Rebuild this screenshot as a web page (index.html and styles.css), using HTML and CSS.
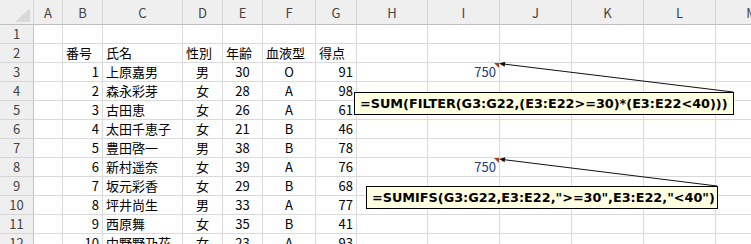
FILE: index.html
```html
<!DOCTYPE html>
<html lang="ja">

<head>
    <meta charset="UTF-8">
    <title>SUM FILTER と SUMIFS</title>
    <link rel="stylesheet" href="styles.css">
</head>

<body>
    <div class="sheet">
        <table class="grid">
            <colgroup>
                <col class="w-head">
                <col class="w-a">
                <col class="w-b">
                <col class="w-c">
                <col class="w-b">
                <col class="w-b">
                <col class="w-f">
                <col class="w-g">
                <col class="w-h">
                <col class="w-wide">
                <col class="w-wide">
                <col class="w-wide">
                <col class="w-wide">
                <col class="w-wide">
            </colgroup>
            <thead id="colHeads"></thead>
            <tbody id="rows"></tbody>
        </table>

        <div class="note note-filter">=SUM(FILTER(G3:G22,(E3:E22&gt;=30)*(E3:E22&lt;40)))</div>
        <div class="note note-sumifs">=SUMIFS(G3:G22,E3:E22,"&gt;=30",E3:E22,"&lt;40")</div>

        <svg class="arrows" width="751" height="244" viewBox="0 0 751 244">
            <line x1="733" y1="92" x2="505" y2="64.2" />
            <polygon points="499,63.5 505.3,61.8 504.7,66.7" />
            <line x1="717" y1="186" x2="505" y2="159.8" />
            <polygon points="499,159 505.3,157.3 504.7,162.2" />
        </svg>
    </div>

    <script>
        const letters = 'ABCDEFGHIJKLM'.split('');
        const labels = ['番号', '氏名', '性別', '年齢', '血液型', '得点'];
        const people = [
            [1, '上原嘉男', '男', 30, 'O', 91],
            [2, '森永彩芽', '女', 28, 'A', 98],
            [3, '古田恵', '女', 26, 'A', 61],
            [4, '太田千恵子', '女', 21, 'B', 46],
            [5, '豊田啓一', '男', 38, 'B', 78],
            [6, '新村遥奈', '女', 39, 'A', 76],
            [7, '坂元彩香', '女', 29, 'B', 68],
            [8, '坪井尚生', '男', 33, 'A', 77],
            [9, '西原舞', '女', 35, 'B', 41],
            [10, '中野野乃花', '女', 23, 'A', 93]
        ];
        // alignment of B..G like in the workbook
        const align = ['num', 'txt', 'ctr', 'ctr', 'ctr', 'num'];

        // column letters
        const headRow = document.createElement('tr');
        headRow.innerHTML = '<th class="corner"><svg width="33" height="24"><polygon points="15,22 30,22 30,8" /></svg></th>' +
            letters.map(l => `<th>${l}</th>`).join('');
        document.getElementById('colHeads').appendChild(headRow);

        const body = document.getElementById('rows');
        for (let r = 1; r <= 12; r++) {
            const cells = letters.map(() => '<td></td>');
            if (r === 2) {
                labels.forEach((label, i) => cells[i + 1] = `<td class="txt">${label}</td>`);
            }
            const person = people[r - 3];
            if (person) {
                person.forEach((value, i) => cells[i + 1] = `<td class="${align[i]}">${value}</td>`);
            }
            if (r === 3 || r === 8) {
                cells[8] = '<td class="num result noted">750</td>';
            }
            const tr = document.createElement('tr');
            tr.innerHTML = `<th>${r}</th>` + cells.join('');
            body.appendChild(tr);
        }
    </script>
</body>

</html>
```

FILE: styles.css
```css
body {
    margin: 0;
    overflow: hidden;
    background: #fff;
    font-family: "Noto Sans CJK JP", "Noto Sans", sans-serif;
}

.sheet {
    position: relative;
    width: 751px;
    height: 244px;
    overflow: hidden;
}

.grid {
    table-layout: fixed;
    width: 788px;
    border-collapse: separate;
    border-spacing: 0;
    font-size: 13px;
    color: #000;
}

.w-head { width: 34px; }
.w-a { width: 29px; }
.w-b { width: 40px; }
.w-c { width: 80px; }
.w-f { width: 53px; }
.w-g { width: 41px; }
.w-h { width: 71px; }
.w-wide { width: 72px; }

.grid td,
.grid th {
    height: 19px;
    padding: 0 3px;
    border-right: 1px solid #dadada;
    border-bottom: 1px solid #dadada;
    line-height: 18px;
    vertical-align: bottom;
    white-space: nowrap;
    overflow: hidden;
    box-sizing: border-box;
}

.grid th {
    background: #efefef;
    font-weight: normal;
    color: #444;
    text-align: center;
    padding: 0;
}

.grid thead th {
    height: 25px;
    border-right-color: #d4d4d4;
    border-bottom-color: #bfbfbf;
    line-height: 22px;
}

.grid tbody th {
    border-right-color: #c4c4c4;
    border-bottom-color: #d6d6d6;
}

.grid .corner {
    padding: 0;
    vertical-align: top;
    line-height: 0;
}

.corner polygon {
    fill: #d9d9d9;
}

.txt {
    text-align: left;
}

.num {
    text-align: right;
}

.ctr {
    text-align: center;
}

.result {
    color: #243c78;
}

.noted {
    position: relative;
}

.noted::after {
    content: "";
    position: absolute;
    top: 0;
    right: 0;
    border-top: 5px solid #a8401c;
    border-left: 5px solid transparent;
}

.note {
    position: absolute;
    box-sizing: border-box;
    height: 23px;
    padding: 0 5px;
    background: #ffffe1;
    border: 1px solid #000;
    font-family: "DejaVu Sans", sans-serif;
    font-weight: bold;
    font-size: 12.8px;
    line-height: 21px;
    white-space: nowrap;
    color: #000;
}

.note-filter {
    left: 354px;
    top: 92px;
    width: 380px;
}

.note-sumifs {
    left: 366px;
    top: 186px;
    width: 352px;
}

.arrows {
    position: absolute;
    left: 0;
    top: 0;
    pointer-events: none;
}

.arrows line {
    stroke: #111;
    stroke-width: 1;
}

.arrows polygon {
    fill: #111;
}
```
